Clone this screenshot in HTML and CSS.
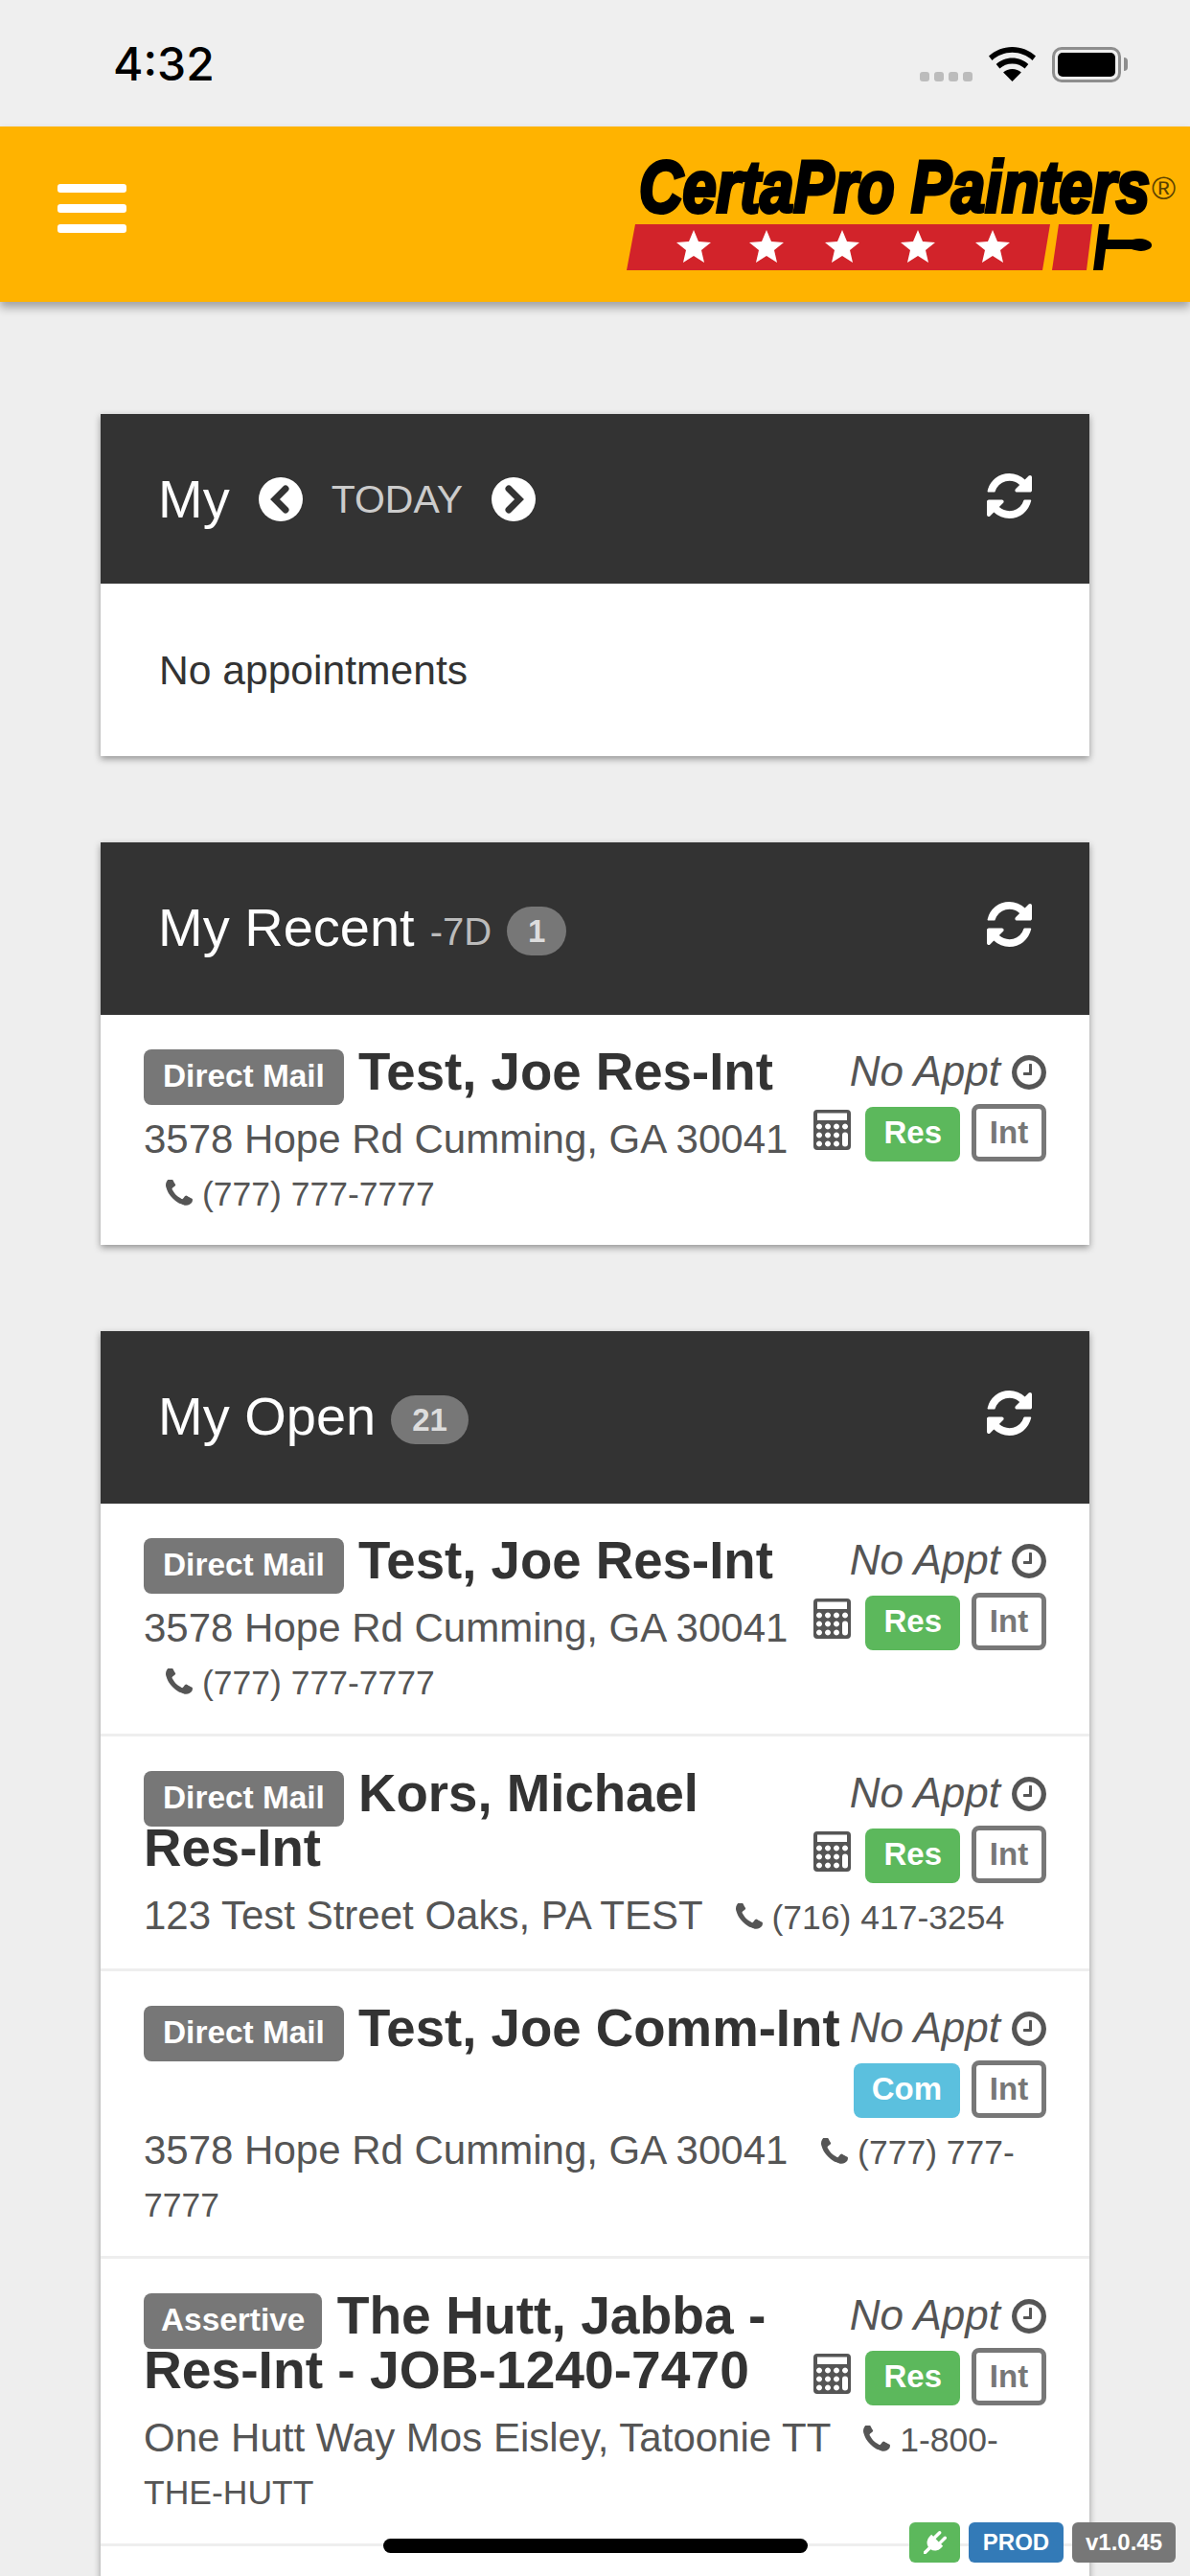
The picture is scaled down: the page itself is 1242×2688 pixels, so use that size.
FILE: index.html
```html
<!DOCTYPE html>
<html lang="en">
<head>
<meta charset="utf-8">
<title>CertaPro Painters</title>
<link rel="stylesheet" href="styles.css">
</head>
<body>
<svg class="defs" width="0" height="0" aria-hidden="true">
  <defs>
    <symbol id="i-refresh" viewBox="128 128 1536 1536"><path d="M1639 1056q0 5-1 7-64 268-268 434.5t-478 166.5q-146 0-282.5-55t-243.5-157l-129 129q-19 19-45 19t-45-19-19-45v-448q0-26 19-45t45-19h448q26 0 45 19t19 45-19 45l-137 137q71 66 161 102t187 36q134 0 250-65t186-179q11-17 53-117 8-23 30-23h192q13 0 22.5 9.5t9.5 22.5zm25-800v448q0 26-19 45t-45 19h-448q-26 0-45-19t-19-45 19-45l138-138q-148-137-349-137-134 0-250 65t-186 179q-11 17-53 117-8 23-30 23h-199q-13 0-22.5-9.5t-9.5-22.5v-7q65-268 270-434.5t480-166.5q146 0 284 55.5t245 156.5l130-129q19-19 45-19t45 19 19 45z"/></symbol>
    <symbol id="i-phone" viewBox="192 192 1408 1408"><path d="M1600 1240q0 27-10 70.5t-21 68.5q-21 50-122 106-94 51-186 51-27 0-53-3.5t-57.5-12.5-47-14.5-55.5-20.5-49-18q-98-35-175-83-127-79-264-216t-216-264q-48-77-83-175-3-9-18-49t-20.5-55.5-14.5-47-12.5-57.5-3.5-53q0-92 51-186 56-101 106-122 25-11 68.5-21t70.5-10q14 0 21 3 18 6 53 76 11 19 30 54t35 63.5 31 53.5q3 4 17.5 25t21.5 35.5 7 28.5q0 20-28.5 50t-62 55-62 53-28.5 46q0 9 5 22.5t8.5 20.5 14 24 11.5 19q76 137 174 235t235 174q2 1 19 11.5t24 14 20.5 8.5 22.5 5q18 0 46-28.5t53-62 55-62 50-28.5q14 0 28.5 7t35.5 21.5 25 17.5q25 15 53.5 31t63.5 35 54 30q70 35 76 53 3 7 3 21z"/></symbol>
    <symbol id="i-clock" viewBox="128 128 1536 1536"><path d="M1024 544v448q0 14-9 23t-23 9h-320q-14 0-23-9t-9-23v-64q0-14 9-23t23-9h224v-352q0-14 9-23t23-9h64q14 0 23 9t9 23zm416 352q0-148-73-273t-198-198-273-73-273 73-198 198-73 273 73 273 198 198 273 73 273-73 198-198 73-273zm224 0q0 209-103 385.5t-279.5 279.5-385.5 103-385.5-103-279.5-279.5-103-385.5 103-385.5 279.5-279.5 385.5-103 385.5 103 279.5 279.5 103 385.5z"/></symbol>
    <symbol id="i-calc" viewBox="0 0 39 42">
      <path fill-rule="evenodd" d="M4 0h31a4 4 0 0 1 4 4v34a4 4 0 0 1-4 4H4a4 4 0 0 1-4-4V4a4 4 0 0 1 4-4zM4 3.500v7.500h31V3.500zM6 14.500a3 3 0 1 0 .01 0zM15 14.500a3 3 0 1 0 .01 0zM24 14.500a3 3 0 1 0 .01 0zM33 14.500a3 3 0 1 0 .01 0zM6 23.500a3 3 0 1 0 .01 0zM15 23.500a3 3 0 1 0 .01 0zM24 23.500a3 3 0 1 0 .01 0zM33 23.500a3 3 0 0 0-3 3v9a3 3 0 0 0 6 0v-9a3 3 0 0 0-3-3zM6 32.500a3 3 0 1 0 .01 0zM15 32.500a3 3 0 1 0 .01 0zM24 32.500a3 3 0 1 0 .01 0z"/>
    </symbol>
  </defs>
</svg>

<div class="statusbar">
  <span class="time">4:32</span>
  <div class="status-icons">
    <div class="signal"><i></i><i></i><i></i><i></i></div>
    <svg class="wifi" viewBox="0 0 49 36"><path d="M24.500 0C15 0 6.500 3.600 0 9.600l3.500 4.400C9.200 8.800 16.500 5.800 24.500 5.800s15.300 3 21 8.200L49 9.600C42.500 3.600 34 0 24.500 0z"/><path d="M24.500 11.500c-6.500 0-12.400 2.400-16.800 6.500l3.700 4.500c3.400-3.100 8-5 13.100-5s9.700 1.900 13.100 5l3.700-4.500c-4.400-4.100-10.300-6.500-16.800-6.500z"/><path d="M24.500 23c-3.600 0-6.900 1.300-9.400 3.500L24.500 36l9.400-9.500c-2.500-2.200-5.800-3.500-9.400-3.500z"/></svg>
    <div class="battery"><div class="battery-fill"></div></div>
    <div class="battery-cap"></div>
  </div>
</div>

<header class="navbar">
  <div class="burger"><i></i><i></i><i></i></div>
  <svg class="logo" viewBox="650 155 582 135">
    <text class="logo-name" x="667" y="221" textLength="533" lengthAdjust="spacingAndGlyphs">CertaPro Painters</text>
    <text class="logo-reg" x="1202" y="208">®</text>
    <polygon class="logo-red" points="663,234 1096,234 1088,282 654,282"/>
    <polygon class="logo-red" points="1105,234 1140,234 1134,282 1098,282"/>
    <g class="logo-star">
      <polygon points="724,240 729,252 742,253 732,261 735,274 724,267 713,274 716,261 706,253 719,252"/>
      <polygon points="800,240 805,252 818,253 808,261 811,274 800,267 789,274 792,261 782,253 795,252"/>
      <polygon points="879,240 884,252 897,253 887,261 890,274 879,267 868,274 871,261 861,253 874,252"/>
      <polygon points="958,240 963,252 976,253 966,261 969,274 958,267 947,274 950,261 940,253 953,252"/>
      <polygon points="1036,240 1041,252 1054,253 1044,261 1047,274 1036,267 1025,274 1028,261 1018,253 1031,252"/>
    </g>
    <path class="logo-roller" d="M1147 234h11l-2 16h26c8-2 14-1 19 3 2 3 1 6-2 7-6 3-12 2-18 0h-27l-3 22h-10z"/>
  </svg>
</header>

<main class="content">
  <section class="card">
    <div class="card-head">
      <h2 class="card-title">My</h2>
      <svg class="chev" viewBox="-23 -23 46 46"><circle r="23"/><path d="M5 -11L-6 0L5 11"/></svg>
      <span class="today">TODAY</span>
      <svg class="chev" viewBox="-23 -23 46 46"><circle r="23"/><path d="M-5 -11L6 0L-5 11"/></svg>
      <svg class="refresh"><use href="#i-refresh"/></svg>
    </div>
    <p class="empty">No appointments</p>
  </section>

  <section class="card">
    <div class="card-head card-head-count">
      <h2 class="card-title">My Recent</h2>
      <span class="range">-7D</span>
      <span class="count">1</span>
      <svg class="refresh"><use href="#i-refresh"/></svg>
    </div>
    <article class="job">
      <div class="job-meta">
        <div class="appt">No Appt <svg class="clock"><use href="#i-clock"/></svg></div>
        <div class="tags">
          <svg class="calc"><use href="#i-calc"/></svg>
          <span class="tag tag-res">Res</span>
          <span class="tag tag-int">Int</span>
        </div>
      </div>
      <h3 class="job-title"><span class="source">Direct Mail</span> Test, Joe Res-Int</h3>
      <p class="job-addr">3578 Hope Rd Cumming, GA 30041 <span class="phone"><svg class="phone-icon"><use href="#i-phone"/></svg>(777) 777-7777</span></p>
    </article>
  </section>

  <section class="card">
    <div class="card-head card-head-count">
      <h2 class="card-title">My Open</h2>
      <span class="count">21</span>
      <svg class="refresh"><use href="#i-refresh"/></svg>
    </div>
    <article class="job">
      <div class="job-meta">
        <div class="appt">No Appt <svg class="clock"><use href="#i-clock"/></svg></div>
        <div class="tags">
          <svg class="calc"><use href="#i-calc"/></svg>
          <span class="tag tag-res">Res</span>
          <span class="tag tag-int">Int</span>
        </div>
      </div>
      <h3 class="job-title"><span class="source">Direct Mail</span> Test, Joe Res-Int</h3>
      <p class="job-addr">3578 Hope Rd Cumming, GA 30041 <span class="phone"><svg class="phone-icon"><use href="#i-phone"/></svg>(777) 777-7777</span></p>
    </article>
    <article class="job">
      <div class="job-meta">
        <div class="appt">No Appt <svg class="clock"><use href="#i-clock"/></svg></div>
        <div class="tags">
          <svg class="calc"><use href="#i-calc"/></svg>
          <span class="tag tag-res">Res</span>
          <span class="tag tag-int">Int</span>
        </div>
      </div>
      <h3 class="job-title"><span class="source">Direct Mail</span> Kors, Michael Res-Int</h3>
      <p class="job-addr">123 Test Street Oaks, PA TEST <span class="phone"><svg class="phone-icon"><use href="#i-phone"/></svg>(716) 417-3254</span></p>
    </article>
    <article class="job">
      <div class="job-meta">
        <div class="appt">No Appt <svg class="clock"><use href="#i-clock"/></svg></div>
        <div class="tags">
          <span class="tag tag-com">Com</span>
          <span class="tag tag-int">Int</span>
        </div>
      </div>
      <h3 class="job-title job-title-tall"><span class="source">Direct Mail</span> Test, Joe Comm-Int</h3>
      <p class="job-addr">3578 Hope Rd Cumming, GA 30041 <span class="phone"><svg class="phone-icon"><use href="#i-phone"/></svg>(777) 777-7777</span></p>
    </article>
    <article class="job">
      <div class="job-meta">
        <div class="appt">No Appt <svg class="clock"><use href="#i-clock"/></svg></div>
        <div class="tags">
          <svg class="calc"><use href="#i-calc"/></svg>
          <span class="tag tag-res">Res</span>
          <span class="tag tag-int">Int</span>
        </div>
      </div>
      <h3 class="job-title job-title-wide"><span class="source">Assertive</span> The Hutt, Jabba - Res-Int - JOB-1240-7470</h3>
      <p class="job-addr">One Hutt Way Mos Eisley, Tatoonie TT <span class="phone"><svg class="phone-icon"><use href="#i-phone"/></svg>1-800-THE-HUTT</span></p>
    </article>
    <article class="job job-next"></article>
  </section>
</main>

<div class="env">
  <span class="env-badge env-ok"><svg class="plug" viewBox="0 0 1792 1792"><path d="M1755 453q37 38 37 90.5t-37 90.5l-401 400 150 150-160 160q-163 163-389.5 186.5t-411.5-100.5l-362 362h-181v-181l362-362q-124-185-100.5-411.5t186.5-389.5l160-160 150 150 400-401q38-37 91-37t90 37 37 90.5-37 90.5l-400 401 234 234 401-400q38-37 91-37t90 37z"/></svg></span>
  <span class="env-badge env-prod">PROD</span>
  <span class="env-badge env-ver">v1.0.45</span>
</div>
<div class="home-indicator"></div>
</body>
</html>
```

FILE: styles.css
```css
* { box-sizing: border-box; }

html, body {
  margin: 0;
  height: 2688px;
  overflow: hidden;
}

body {
  background: #eee;
  color: #333;
  font-family: "Liberation Sans", Arial, sans-serif;
  font-size: 42px;
}

.defs { position: absolute; }

/* status bar */
.statusbar {
  height: 132px;
  background: #efefef;
  display: flex;
  justify-content: space-between;
  padding: 0 65px 0 118px;
}

.time {
  font-family: Inter, sans-serif;
  font-weight: 500;
  font-size: 48px;
  line-height: 58px;
  margin-top: 38px;
  color: #000;
}

.status-icons {
  display: flex;
  align-items: flex-start;
  padding-top: 49px;
}

.signal {
  display: flex;
  gap: 5px;
  margin-top: 26px;
  margin-right: 17px;
}

.signal i {
  width: 10px;
  height: 10px;
  border-radius: 3px;
  background: #bcbcbc;
}

.wifi {
  width: 49px;
  height: 36px;
  margin-right: 17px;
}

.battery {
  width: 72px;
  height: 37px;
  border: 3px solid #8e8e8e;
  border-radius: 10px;
  padding: 3px;
}

.battery-fill {
  height: 100%;
  background: #000;
  border-radius: 5px;
}

.battery-cap {
  width: 4px;
  height: 14px;
  margin: 11px 0 0 3px;
  background: #8e8e8e;
  border-radius: 0 4px 4px 0;
}

/* navbar */
.navbar {
  height: 183px;
  background: #ffb300;
  box-shadow: 0 6px 9px rgba(0, 0, 0, .32);
  display: flex;
  justify-content: space-between;
  align-items: flex-start;
  padding: 23px 10px 0 60px;
  position: relative;
}

.burger {
  width: 72px;
  display: flex;
  flex-direction: column;
  gap: 12px;
  margin-top: 37px;
}

.burger i {
  height: 9px;
  border-radius: 3px;
  background: #fff;
}

.logo {
  width: 582px;
  height: 135px;
}

.logo-name {
  font-family: "Liberation Sans", Arial, sans-serif;
  font-weight: 700;
  font-style: italic;
  font-size: 76px;
  fill: #000;
  stroke: #000;
  stroke-width: 4px;
}

.logo-reg {
  font-family: "Liberation Sans", Arial, sans-serif;
  font-size: 34px;
  fill: #5a4000;
}

.logo-red { fill: #d2232a; }
.logo-star { fill: #fff; }
.logo-roller { fill: #000; }

/* cards */
.content {
  padding: 117px 105px 0;
  display: flex;
  flex-direction: column;
  gap: 90px;
}

.card {
  background: #fff;
  box-shadow: 0 3px 7px rgba(0, 0, 0, .38);
}

.card-head {
  background: #333;
  color: #fff;
  display: flex;
  align-items: center;
  gap: 30px;
  padding: 50px 60px 50px 60px;
  height: 177px;
}

.card-head-count {
  height: 180px;
  padding-bottom: 53px;
  gap: 16px;
}

.card-title {
  margin: 0;
  font-size: 56px;
  font-weight: 400;
  line-height: 77px;
}

.chev {
  width: 46px;
  height: 46px;
  flex: none;
}

.chev circle { fill: #fff; }

.chev path {
  fill: none;
  stroke: #333;
  stroke-width: 7px;
  stroke-linecap: round;
  stroke-linejoin: miter;
}

.today {
  font-size: 41px;
  line-height: 1;
  color: #ccc;
  margin-top: 2px;
}

.range {
  font-size: 40px;
  line-height: 1;
  color: #bbb;
  margin-top: 8px;
}

.count {
  min-width: 61px;
  height: 51px;
  padding: 0 22px;
  border-radius: 26px;
  background: #777;
  color: #ddd;
  font-size: 33px;
  font-weight: 700;
  line-height: 51px;
  text-align: center;
  margin-top: 8px;
}

.refresh {
  width: 47px;
  height: 47px;
  fill: #fff;
  margin-left: auto;
  margin-top: -7px;
  flex: none;
}

.empty {
  margin: 0;
  padding: 60px 61px;
  font-size: 42.600px;
  line-height: 60px;
}

/* job rows */
.job {
  padding: 31px 45px 28px;
  border-bottom: 3px solid #eee;
}

.job:last-child { border-bottom: 0; }

.job::after {
  content: "";
  display: block;
  clear: both;
}

.job-next { height: 100px; }

.job-meta {
  float: right;
  margin-left: 10px;
}

.appt {
  display: flex;
  justify-content: flex-end;
  align-items: flex-start;
  gap: 12px;
  height: 55px;
  line-height: 55px;
  font-style: italic;
  font-size: 44px;
  color: #555;
}

.clock {
  width: 36px;
  height: 36px;
  fill: #555;
  margin-top: 11px;
}

.tags {
  display: flex;
  justify-content: flex-end;
  align-items: flex-end;
  margin-top: 7px;
  gap: 12px;
}

.calc {
  width: 39px;
  height: 42px;
  fill: #555;
  align-self: flex-start;
  margin: 6px 3px 0 0;
}

.tag {
  font-size: 33px;
  font-weight: 700;
  border-radius: 8px;
  text-align: center;
}

.tag-res, .tag-com {
  height: 57px;
  line-height: 54px;
  padding: 0 19px;
  color: #fff;
}

.tag-res { background: #5cb85c; }
.tag-com { background: #5bc0de; }

.tag-int {
  height: 60px;
  line-height: 50px;
  width: 78px;
  border: 5px solid #777;
  color: #777;
}

.job-title {
  margin: 0;
  font-size: 54.600px;
  font-weight: 700;
  line-height: 57px;
  color: #333;
}

.job-title-tall { min-height: 114px; }
.job-title-wide { font-size: 55.200px; }

.source {
  background: #777;
  color: #fff;
  font-size: 33.400px;
  line-height: 1;
  padding: 9px 20px 12px;
  border-radius: 8px;
  vertical-align: 3px;
}

.job-title-wide .source { padding: 9px 18px 12px; }

.job-addr {
  margin: 14px 0 0;
  line-height: 55px;
  color: #555;
}

.phone {
  font-size: 35.500px;
  line-height: 1;
  margin-left: 23px;
}

.phone-icon {
  width: 28px;
  height: 28px;
  fill: #555;
  margin-right: 10px;
  vertical-align: -1px;
}

/* fixed overlays */
.env {
  position: fixed;
  left: 949px;
  top: 2632px;
  display: flex;
  gap: 9px;
}

.env-badge {
  height: 42px;
  border-radius: 6px;
  color: #fff;
  font-size: 24px;
  font-weight: 700;
  line-height: 42px;
  text-align: center;
}

.env-ok {
  width: 53px;
  background: #5cb85c;
  padding-top: 9px;
}

.plug {
  display: block;
  width: 24px;
  height: 24px;
  margin: 0 auto;
  fill: #fff;
}

.env-prod { width: 99px; background: #337ab7; }
.env-ver { width: 108px; background: #777; }

.home-indicator {
  position: fixed;
  left: 400px;
  top: 2649px;
  width: 443px;
  height: 15px;
  border-radius: 8px;
  background: #000;
}
```
